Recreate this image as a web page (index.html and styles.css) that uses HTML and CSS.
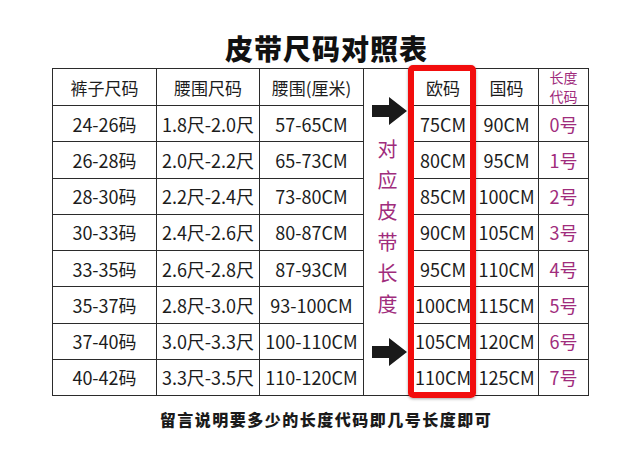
FILE: index.html
```html
<!DOCTYPE html>
<html lang="zh-CN">
<head>
<meta charset="utf-8">
<title>皮带尺码对照表</title>
<link rel="stylesheet" href="styles.css">
</head>
<body>
<div class="page">
  <h1 class="title">皮带尺码对照表</h1>
  <div class="chart">
    <div class="grid">
      <div class="cell head">裤子尺码</div>
      <div class="cell head">腰围尺码</div>
      <div class="cell head">腰围(厘米)</div>
      <div class="cell link">
        <svg class="arrow" width="35" height="28" viewBox="0 0 35 28"><path d="M0 8H17V0L35 14L17 28V20H0Z" fill="#1a1a1a"/></svg>
        <div class="vtext">对<br>应<br>皮<br>带<br>长<br>度</div>
        <svg class="arrow arrow-low" width="35" height="28" viewBox="0 0 35 28"><path d="M0 8H17V0L35 14L17 28V20H0Z" fill="#1a1a1a"/></svg>
      </div>
      <div class="cell head">欧码</div>
      <div class="cell head">国码</div>
      <div class="cell head code-head">长度<br>代码</div>

      <div class="cell">24-26码</div><div class="cell">1.8尺-2.0尺</div><div class="cell">57-65CM</div><div class="cell">75CM</div><div class="cell">90CM</div><div class="cell code">0号</div>
      <div class="cell">26-28码</div><div class="cell">2.0尺-2.2尺</div><div class="cell">65-73CM</div><div class="cell">80CM</div><div class="cell">95CM</div><div class="cell code">1号</div>
      <div class="cell">28-30码</div><div class="cell">2.2尺-2.4尺</div><div class="cell">73-80CM</div><div class="cell">85CM</div><div class="cell">100CM</div><div class="cell code">2号</div>
      <div class="cell">30-33码</div><div class="cell">2.4尺-2.6尺</div><div class="cell">80-87CM</div><div class="cell">90CM</div><div class="cell">105CM</div><div class="cell code">3号</div>
      <div class="cell">33-35码</div><div class="cell">2.6尺-2.8尺</div><div class="cell">87-93CM</div><div class="cell">95CM</div><div class="cell">110CM</div><div class="cell code">4号</div>
      <div class="cell">35-37码</div><div class="cell">2.8尺-3.0尺</div><div class="cell">93-100CM</div><div class="cell">100CM</div><div class="cell">115CM</div><div class="cell code">5号</div>
      <div class="cell">37-40码</div><div class="cell">3.0尺-3.3尺</div><div class="cell">100-110CM</div><div class="cell">105CM</div><div class="cell">120CM</div><div class="cell code">6号</div>
      <div class="cell">40-42码</div><div class="cell">3.3尺-3.5尺</div><div class="cell">110-120CM</div><div class="cell">110CM</div><div class="cell">125CM</div><div class="cell code">7号</div>
    </div>
    <div class="highlight"></div>
  </div>
  <p class="note">留言说明要多少的长度代码即几号长度即可</p>
</div>
</body>
</html>
```

FILE: styles.css
```css
html, body {
  margin: 0;
  padding: 0;
  background: #ffffff;
}

body {
  font-family: "Noto Sans CJK SC", "Noto Sans", sans-serif;
  color: #1c1c1c;
}

.page {
  width: 640px;
  height: 453px;
  overflow: hidden;
}

.title {
  margin: 0;
  padding: 28px 0 0 13px;
  height: 40px;
  line-height: 40px;
  font-size: 28px;
  font-weight: 900;
  text-align: center;
  letter-spacing: 1px;
  color: #111;
}

.chart {
  position: relative;
  width: 537px;
  margin-left: 52px;
}

.grid {
  display: grid;
  grid-template-columns: 104px 103px 104px 48px 63px 64px 50px;
  grid-template-rows: 37px repeat(8, 36.25px);
  border-top: 1px solid #2b2b2b;
  border-left: 1px solid #2b2b2b;
}

.cell {
  box-sizing: border-box;
  border-right: 1px solid #2b2b2b;
  border-bottom: 1px solid #2b2b2b;
  display: flex;
  align-items: center;
  justify-content: center;
  font-size: 18px;
  white-space: nowrap;
}

.head {
  font-size: 17px;
}

.code-head {
  font-size: 14px;
  line-height: 19px;
  text-align: center;
  color: #a02c7c;
}

.code {
  color: #a02c7c;
}

.link {
  grid-column: 4;
  grid-row: 1 / -1;
  flex-direction: column;
  justify-content: flex-start;
  padding-top: 28px;
}

.arrow {
  display: block;
  margin-left: 4px;
}

.arrow-low {
  margin-top: 19px;
}

.vtext {
  margin-top: 8px;
  font-size: 20px;
  line-height: 31px;
  color: #a02c7c;
  text-align: center;
}

.highlight {
  position: absolute;
  left: 356px;
  top: -3px;
  width: 68px;
  height: 333px;
  box-sizing: border-box;
  border: 6px solid #f20d0d;
  border-radius: 5px;
  box-shadow: 0 1px 3px rgba(0, 0, 0, 0.35);
  pointer-events: none;
}

.note {
  margin: 11px 0 0;
  padding-left: 12px;
  line-height: 24px;
  font-size: 16px;
  font-weight: 900;
  letter-spacing: 1.5px;
  text-align: center;
  color: #1a1a1a;
}
```
